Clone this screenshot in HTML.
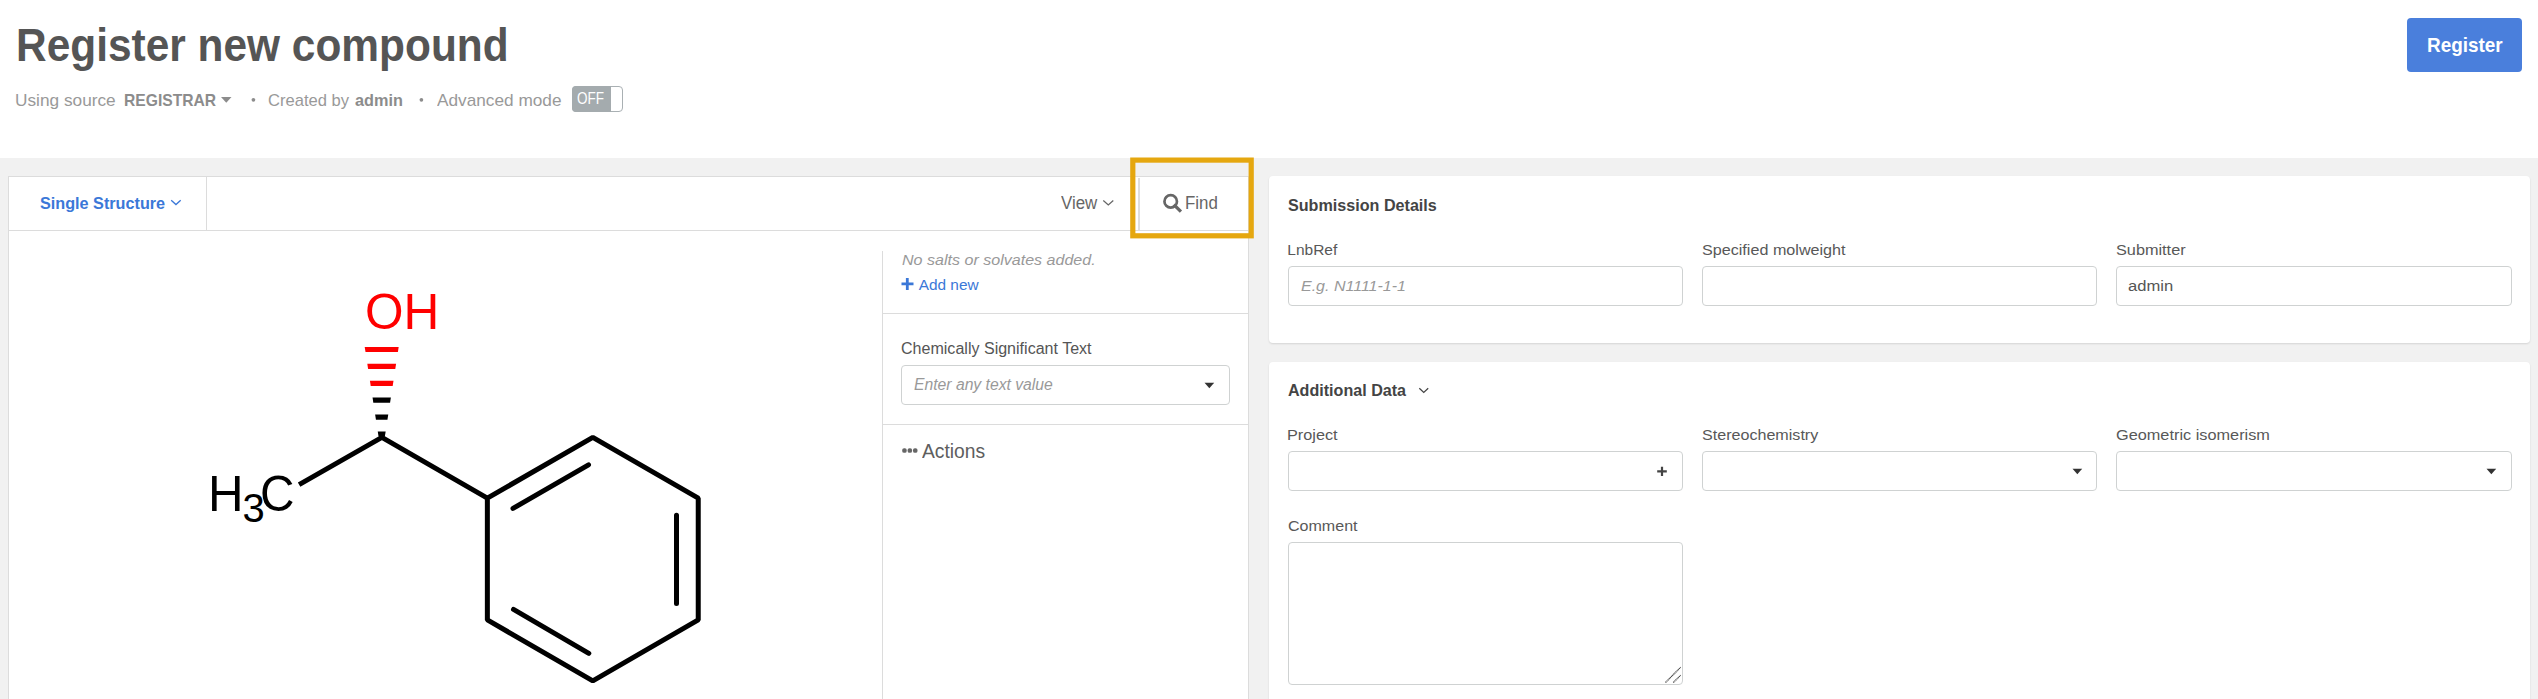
<!DOCTYPE html>
<html><head><meta charset="utf-8"><style>
html,body{margin:0;padding:0;background:#fff;width:2538px;height:699px;overflow:hidden;position:relative;font-family:"Liberation Sans", sans-serif;}
.t{position:absolute;line-height:1;white-space:nowrap;transform-origin:0 0;}
.r{position:absolute;}
</style></head><body>
<div class="r" style="left:0px;top:158px;width:2538px;height:541px;background:#f1f1f1;"></div>
<div class="r" style="left:8px;top:176px;width:1241px;height:523px;background:#fff;border:1px solid #dcdcdc;border-bottom:none;box-sizing:border-box;"></div>
<div class="r" style="left:9px;top:230px;width:1239px;height:1px;background:#dcdcdc;"></div>
<div class="r" style="left:206px;top:177px;width:1px;height:53px;background:#dcdcdc;"></div>
<div class="r" style="left:1138px;top:178px;width:2px;height:52px;background:#dedede;"></div>
<div class="r" style="left:882px;top:251px;width:1px;height:448px;background:#dcdcdc;"></div>
<div class="r" style="left:883px;top:313px;width:366px;height:1px;background:#dcdcdc;"></div>
<div class="r" style="left:883px;top:424px;width:366px;height:1px;background:#dcdcdc;"></div>
<div class="r" style="left:1269px;top:176px;width:1261px;height:167px;background:#fff;border-radius:4px;box-shadow:0 1px 2px rgba(0,0,0,0.12);"></div>
<div class="r" style="left:1269px;top:362px;width:1261px;height:400px;background:#fff;border-radius:4px;box-shadow:0 1px 2px rgba(0,0,0,0.12);"></div>
<div class="t" style="left:15.65px;top:21.71px;font-size:46.4px;color:#555;font-weight:bold;font-style:normal;transform:scaleX(0.9145);">Register new compound</div>
<div class="t" style="left:15.08px;top:92.01px;font-size:17px;color:#999;font-weight:normal;font-style:normal;transform:scaleX(1.0149);">Using source</div>
<div class="t" style="left:124.19px;top:92.01px;font-size:17px;color:#8c8c8c;font-weight:bold;font-style:normal;transform:scaleX(0.9196);">REGISTRAR</div>
<svg class="r" style="left:221px;top:97.4px" width="11" height="6" viewBox="0 0 11 6"><path d="M0 0H10.5L5.25 5.8Z" fill="#8c8c8c"/></svg>
<svg class="r" style="left:248px;top:95px" width="10" height="10" viewBox="248 95 10 10"><circle cx="253.4" cy="99.8" r="1.85" fill="#8c8c8c"/></svg>
<div class="t" style="left:268.42px;top:91.61px;font-size:17px;color:#999;font-weight:normal;font-style:normal;transform:scaleX(0.9750);">Created by</div>
<div class="t" style="left:355.42px;top:91.61px;font-size:17px;color:#8c8c8c;font-weight:bold;font-style:normal;transform:scaleX(0.9553);">admin</div>
<svg class="r" style="left:416px;top:95px" width="10" height="10" viewBox="416 95 10 10"><circle cx="421.4" cy="99.8" r="1.85" fill="#8c8c8c"/></svg>
<div class="t" style="left:437.00px;top:91.61px;font-size:17px;color:#999;font-weight:normal;font-style:normal;transform:scaleX(1.0131);">Advanced mode</div>
<div class="r" style="left:572px;top:86px;width:51px;height:26px;background:#fff;border:1px solid #a9b0b3;border-radius:4px;box-sizing:border-box;"></div>
<div class="r" style="left:572px;top:86px;width:39px;height:26px;background:#a4abae;border-radius:4px 0 0 4px;"></div>
<div class="t" style="left:576.70px;top:90.62px;font-size:15.8px;color:#fff;font-weight:normal;font-style:normal;transform:scaleX(0.8569);">OFF</div>
<div class="r" style="left:2407px;top:18px;width:115px;height:54px;background:#4a7fdc;border-radius:4px;"></div>
<div class="t" style="left:2426.62px;top:35.86px;font-size:19.3px;color:#fff;font-weight:bold;font-style:normal;transform:scaleX(0.9813);">Register</div>
<div class="t" style="left:40.03px;top:194.97px;font-size:17.4px;color:#3b78d8;font-weight:bold;font-style:normal;transform:scaleX(0.9316);">Single Structure</div>
<svg class="r" style="left:170px;top:199px" width="12" height="8" viewBox="0 0 12 8"><path d="M1.2 1.2L5.95 5.6L10.7 1.2" fill="none" stroke="#3b78d8" stroke-width="1.3"/></svg>
<div class="t" style="left:1060.60px;top:194.70px;font-size:17.6px;color:#666;font-weight:normal;font-style:normal;transform:scaleX(0.9599);">View</div>
<svg class="r" style="left:1102px;top:199px" width="13" height="8" viewBox="0 0 13 8"><path d="M1.3 1.5L6.3 6L11.3 1.5" fill="none" stroke="#666" stroke-width="1.25"/></svg>
<svg class="r" style="left:1161px;top:192px" width="22" height="22" viewBox="0 0 22 22"><circle cx="9.7" cy="9.4" r="6.25" fill="none" stroke="#666" stroke-width="2.7"/><path d="M13.9 13.7L18.8 18.6" stroke="#666" stroke-width="3.2" stroke-linecap="square"/></svg>
<div class="t" style="left:1185.16px;top:194.80px;font-size:17.6px;color:#666;font-weight:normal;font-style:normal;transform:scaleX(0.9607);">Find</div>
<svg class="r" style="left:1120px;top:150px" width="145" height="100" viewBox="1120 150 145 100"><rect x="1132.8" y="160.1" width="118.4" height="75.7" fill="none" stroke="#e5a70f" stroke-width="5.2"/></svg>
<div class="t" style="left:902.18px;top:251.56px;font-size:15.4px;color:#999;font-weight:normal;font-style:italic;transform:scaleX(1.0432);">No salts or solvates added.</div>
<svg class="r" style="left:901px;top:277px" width="14" height="14" viewBox="0 0 14 14"><path d="M6.3 1V13M0.5 6.9H12.5" stroke="#3b78d8" stroke-width="2.8"/></svg>
<div class="t" style="left:918.70px;top:276.76px;font-size:15.4px;color:#3b78d8;font-weight:normal;font-style:normal;">Add new</div>
<div class="t" style="left:901.20px;top:341.45px;font-size:16px;color:#555;font-weight:normal;font-style:normal;transform:scaleX(1.0029);">Chemically Significant Text</div>
<div class="r" style="left:901px;top:365px;width:329px;height:40px;border:1px solid #cfd2d2;border-radius:4px;box-sizing:border-box;"></div>
<div class="t" style="left:914.01px;top:377.45px;font-size:16px;color:#999;font-weight:normal;font-style:italic;transform:scaleX(0.9814);">Enter any text value</div>
<svg class="r" style="left:1204px;top:382px" width="11" height="7" viewBox="0 0 11 7"><path d="M0.5 0.8H10.2L5.35 6.2Z" fill="#333"/></svg>
<svg class="r" style="left:902px;top:447px" width="16" height="7" viewBox="0 0 16 7"><rect x="0.2" y="1.2" width="4.5" height="4.6" rx="1.9" fill="#666"/><rect x="5.6" y="1.2" width="4.5" height="4.6" rx="1.9" fill="#666"/><rect x="11" y="1.2" width="4.5" height="4.6" rx="1.9" fill="#666"/></svg>
<div class="t" style="left:922.00px;top:441.70px;font-size:19.6px;color:#5e5e5e;font-weight:normal;font-style:normal;transform:scaleX(0.9831);">Actions</div>
<div class="t" style="left:1288.30px;top:196.87px;font-size:16.1px;color:#444;font-weight:bold;font-style:normal;transform:scaleX(1.0023);">Submission Details</div>
<div class="t" style="left:1287.30px;top:242.18px;font-size:15.5px;color:#585858;font-weight:normal;font-style:normal;">LnbRef</div>
<div class="r" style="left:1288px;top:266px;width:395px;height:40px;border:1px solid #cfd2d2;border-radius:4px;box-sizing:border-box;background:#fff;"></div>
<div class="t" style="left:1701.67px;top:242.18px;font-size:15.5px;color:#585858;font-weight:normal;font-style:normal;transform:scaleX(1.0413);">Specified molweight</div>
<div class="r" style="left:1702px;top:266px;width:395px;height:40px;border:1px solid #cfd2d2;border-radius:4px;box-sizing:border-box;background:#fff;"></div>
<div class="t" style="left:2115.87px;top:242.18px;font-size:15.5px;color:#585858;font-weight:normal;font-style:normal;transform:scaleX(1.0494);">Submitter</div>
<div class="r" style="left:2116px;top:266px;width:396px;height:40px;border:1px solid #cfd2d2;border-radius:4px;box-sizing:border-box;background:#fff;"></div>
<div class="t" style="left:1300.58px;top:277.66px;font-size:15.4px;color:#999;font-weight:normal;font-style:italic;transform:scaleX(1.0398);">E.g. N1111-1-1</div>
<div class="t" style="left:2127.95px;top:277.66px;font-size:15.4px;color:#555;font-weight:normal;font-style:normal;transform:scaleX(1.0773);">admin</div>
<div class="t" style="left:1288.00px;top:382.07px;font-size:16.1px;color:#444;font-weight:bold;font-style:normal;">Additional Data</div>
<svg class="r" style="left:1418px;top:386px" width="12" height="8" viewBox="0 0 12 8"><path d="M1.3 2.2L5.75 6.4L10.2 2.2" fill="none" stroke="#444" stroke-width="1.25"/></svg>
<div class="t" style="left:1287.14px;top:427.38px;font-size:15.5px;color:#585858;font-weight:normal;font-style:normal;transform:scaleX(1.0483);">Project</div>
<div class="r" style="left:1288px;top:451px;width:395px;height:40px;border:1px solid #cfd2d2;border-radius:4px;box-sizing:border-box;background:#fff;"></div>
<div class="t" style="left:1701.57px;top:427.38px;font-size:15.5px;color:#585858;font-weight:normal;font-style:normal;transform:scaleX(1.0383);">Stereochemistry</div>
<div class="r" style="left:1702px;top:451px;width:395px;height:40px;border:1px solid #cfd2d2;border-radius:4px;box-sizing:border-box;background:#fff;"></div>
<div class="t" style="left:2116.06px;top:427.38px;font-size:15.5px;color:#585858;font-weight:normal;font-style:normal;transform:scaleX(1.0512);">Geometric isomerism</div>
<div class="r" style="left:2116px;top:451px;width:396px;height:40px;border:1px solid #cfd2d2;border-radius:4px;box-sizing:border-box;background:#fff;"></div>
<svg class="r" style="left:1657px;top:466px" width="11" height="11" viewBox="0 0 11 11"><path d="M5 0.8V10M0.2 5.3H9.8" stroke="#444" stroke-width="2.2"/></svg>
<svg class="r" style="left:2071.5px;top:468px" width="11" height="7" viewBox="0 0 11 7"><path d="M0.5 0.8H10.2L5.35 6.2Z" fill="#333"/></svg>
<svg class="r" style="left:2485.5px;top:468px" width="11" height="7" viewBox="0 0 11 7"><path d="M0.5 0.8H10.2L5.35 6.2Z" fill="#333"/></svg>
<div class="t" style="left:1287.88px;top:518.38px;font-size:15.5px;color:#585858;font-weight:normal;font-style:normal;transform:scaleX(1.0350);">Comment</div>
<div class="r" style="left:1288px;top:542px;width:395px;height:143px;border:1px solid #cfd2d2;border-radius:4px;box-sizing:border-box;background:#fff;"></div>
<svg class="r" style="left:1664px;top:666px" width="18" height="18" viewBox="0 0 18 18"><path d="M1.5 16.5L16.6 1.3M9.3 16.5L16.6 9.3" stroke="#444" stroke-width="1.3" stroke-dasharray="1.1 0.5"/></svg>
<svg class="r" style="left:0;top:0" width="880" height="699" viewBox="0 0 880 699"><path d="M592.80 437.30 L698.24 498.17 L698.24 619.92 L592.80 680.80 L487.36 619.92 L487.36 498.17 Z" fill="none" stroke="#000" stroke-width="5" stroke-linejoin="bevel"/><path d="M299.1 484.6 L381.9 437.3 L487.36 498.17" fill="none" stroke="#000" stroke-width="5" stroke-linejoin="bevel"/><path d="M513 508.4 L588.5 464.8 M676.5 515.3 L676.5 603.5 M513.5 609.45 L588.8 653.35" stroke="#000" stroke-width="5" stroke-linecap="round"/><path d="M364.71 346.90H398.69L397.89 352.10H365.51Z" fill="#f00"/><path d="M367.31 363.80H396.09L395.28 369.00H368.12Z" fill="#f00"/><path d="M369.92 380.70H393.48L392.68 385.90H370.72Z" fill="#f00"/><path d="M372.53 397.60H390.87L390.07 402.80H373.33Z" fill="#000"/><path d="M375.14 414.50H388.26L387.46 419.70H375.94Z" fill="#000"/><path d="M377.74 431.40H385.66L384.85 436.60H378.55Z" fill="#000"/></svg>
<div class="t" style="left:364.98px;top:286.64px;font-size:50.5px;color:#f00;font-weight:normal;font-style:normal;transform:scaleX(0.9817);">OH</div>
<div class="t" style="left:208.45px;top:468.67px;font-size:50px;color:#000;font-weight:normal;font-style:normal;transform:scaleX(0.9849);">H</div>
<div class="t" style="left:242.45px;top:488.43px;font-size:40px;color:#000;font-weight:normal;font-style:normal;">3</div>
<div class="t" style="left:259.96px;top:468.87px;font-size:50px;color:#000;font-weight:normal;font-style:normal;transform:scaleX(0.9553);">C</div>
</body></html>
